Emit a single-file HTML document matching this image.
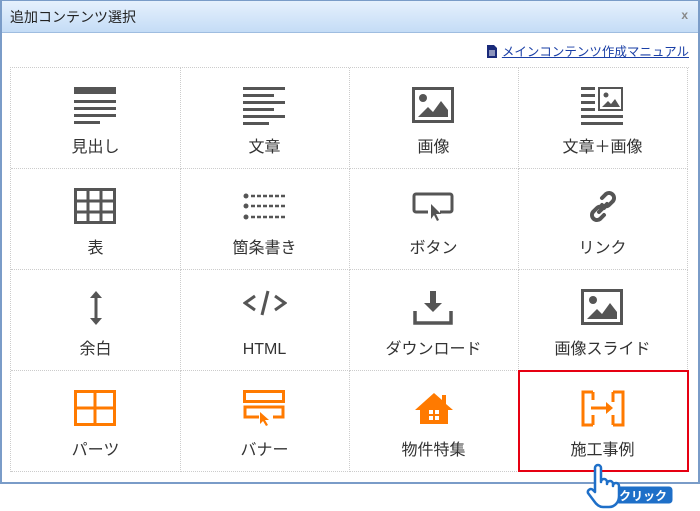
<!DOCTYPE html>
<html><head><meta charset="utf-8"><style>
*{margin:0;padding:0;box-sizing:border-box}
body{width:700px;height:511px;background:#fff;position:relative;overflow:hidden;font-family:"Liberation Sans","Noto Sans CJK JP",sans-serif}
.dlg{position:absolute;left:0;top:0;width:700px;height:484px;border:1px solid #7a9cc8;border-width:1px 2px 2px 2px;background:#fff}
.tb{position:absolute;left:0;top:0;right:0;height:32px;background:linear-gradient(#e6f1fd,#c4dcf6);border-bottom:1px solid #9fbde0}
.tb .t{position:absolute;left:8px;top:6px;font-size:14px;line-height:20px;color:#222}
.tb .x{position:absolute;right:10px;top:7px;font-size:12px;color:#888;font-weight:bold}
.man{position:absolute;right:9px;top:42px;font-size:12.5px;line-height:18px;color:#1a3fa6;text-decoration:underline}
.man svg{vertical-align:-2px;margin-right:5px}
.grid{position:absolute;left:10px;top:67px;width:679px;height:405px;border-top:1px dotted #ccc;border-left:1px dotted #ccc}
.c{position:absolute;width:170px;height:101px;border-right:1px dotted #ccc;border-bottom:1px dotted #ccc}
.c svg{position:absolute;left:50%;top:19px;transform:translateX(-50%)}
.c .l{position:absolute;left:0;right:0;top:70px;line-height:20px;height:20px;text-align:center;font-size:16px;color:#333}
.red{position:absolute;left:518px;top:370px;width:171px;height:102px;border:2px solid #e60012}
</style></head><body>
<div class="dlg">
<div class="tb"><span class="t">追加コンテンツ選択</span><span class="x">x</span></div>
<div class="man"><svg width="10" height="13" viewBox="0 0 10 13"><path d="M0 0h7l3 3v10H0z" fill="#1a2a7a"/><path d="M2 6h6M2 8h6M2 10h6" stroke="#fff" stroke-width="1"/></svg>メインコンテンツ作成マニュアル</div>
</div>
<div class="grid">
<div class="c" style="left:0;top:0"><svg width="44" height="38" viewBox="0 0 44 38"><rect x="0" y="0" width="42" height="7" fill="#555"/><rect x="0" y="13" width="42" height="3" fill="#555"/><rect x="0" y="20" width="42" height="3" fill="#555"/><rect x="0" y="27" width="42" height="3" fill="#555"/><rect x="0" y="34" width="26" height="3" fill="#555"/></svg><div class="l">見出し</div></div>
<div class="c" style="left:169px;top:0"><svg width="44" height="38" viewBox="0 0 44 38"><g fill="#555"><rect y="0" width="42" height="3"/><rect y="7" width="31" height="3"/><rect y="14" width="42" height="3"/><rect y="21" width="31" height="3"/><rect y="28" width="42" height="3"/><rect y="35" width="26" height="3"/></g></svg><div class="l">文章</div></div>
<div class="c" style="left:338px;top:0"><svg width="44" height="38" viewBox="0 0 44 38"><rect x="1.5" y="1.5" width="39" height="33" fill="none" stroke="#555" stroke-width="3"/><circle cx="11" cy="11" r="4" fill="#555"/><path d="M6 30l10-10 5 5 8-11 7 9v7z" fill="#555"/></svg><div class="l">画像</div></div>
<div class="c" style="left:507px;top:0"><svg width="44" height="38" viewBox="0 0 44 38"><g fill="#555"><rect y="0" width="14" height="3"/><rect y="7" width="14" height="3"/><rect y="14" width="14" height="3"/><rect y="21" width="14" height="3"/><rect y="28" width="42" height="3"/><rect y="35" width="42" height="3"/></g><rect x="18" y="1" width="23" height="22" fill="none" stroke="#555" stroke-width="2"/><circle cx="25" cy="8" r="2.5" fill="#555"/><path d="M21 20l6-6 3 3 4-5 5 8z" fill="#555"/></svg><div class="l">文章＋画像</div></div>
<div class="c" style="left:0;top:101px"><svg width="44" height="38" viewBox="0 0 44 38"><rect x="1.5" y="1.5" width="39" height="33" fill="none" stroke="#555" stroke-width="3"/><path d="M1 13h40M1 24h40M14 1v34M27 1v34" stroke="#555" stroke-width="3"/></svg><div class="l">表</div></div>
<div class="c" style="left:169px;top:101px"><svg width="44" height="38" viewBox="0 0 44 38"><g fill="#555"><circle cx="3" cy="8" r="2.5"/><circle cx="3" cy="18" r="2.5"/><circle cx="3" cy="29" r="2.5"/></g><path d="M8 8h34M8 18h34M8 29h34" stroke="#555" stroke-width="2.5" stroke-dasharray="4 2"/></svg><div class="l">箇条書き</div></div>
<div class="c" style="left:338px;top:101px"><svg width="44" height="38" viewBox="0 0 44 38"><path d="M16 24H4a2 2 0 0 1-2-2V8a2 2 0 0 1 2-2h34a2 2 0 0 1 2 2v14a2 2 0 0 1-2 2H28" fill="none" stroke="#555" stroke-width="3"/><path d="M19 16l0 15 3-4 3 6 2-1-3-6 5 0z" fill="#555"/></svg><div class="l">ボタン</div></div>
<div class="c" style="left:507px;top:101px"><svg width="44" height="38" viewBox="0 0 44 38"><g fill="none" stroke="#555" stroke-width="4" stroke-linecap="round"><path d="M21 10l4-4a5 5 0 0 1 7 7l-4 4a5 5 0 0 1-7 0"/><path d="M23 27l-4 4a5 5 0 0 1-7-7l4-4a5 5 0 0 1 7 0"/><path d="M18 24l8-8"/></g></svg><div class="l">リンク</div></div>
<div class="c" style="left:0;top:202px"><svg width="44" height="38" viewBox="0 0 44 38"><path d="M22 6v26" stroke="#555" stroke-width="3"/><path d="M16 9l6-7 6 7zM16 29l6 7 6-7z" fill="#555"/></svg><div class="l">余白</div></div>
<div class="c" style="left:169px;top:202px"><svg width="44" height="38" viewBox="0 0 44 38"><g fill="none" stroke="#555" stroke-width="3"><path d="M12 7l-10 7 10 7M32 7l10 7-10 7M25 2l-6 24"/></g></svg><div class="l">HTML</div></div>
<div class="c" style="left:338px;top:202px"><svg width="44" height="38" viewBox="0 0 44 38"><path d="M3 22v12h36V22" fill="none" stroke="#555" stroke-width="3.5"/><path d="M18 2h6v12h6l-9 9-9-9h6z" fill="#555"/></svg><div class="l">ダウンロード</div></div>
<div class="c" style="left:507px;top:202px"><svg width="44" height="38" viewBox="0 0 44 38"><rect x="1.5" y="1.5" width="39" height="33" fill="none" stroke="#555" stroke-width="3"/><circle cx="12" cy="11" r="4" fill="#555"/><path d="M6 30l10-10 5 5 8-11 7 9v7z" fill="#555"/></svg><div class="l">画像スライド</div></div>
<div class="c" style="left:0;top:303px"><svg width="44" height="38" viewBox="0 0 44 38"><rect x="1.5" y="1.5" width="39" height="33" fill="none" stroke="#ff7a00" stroke-width="3"/><path d="M1 18h40M21 1v34" stroke="#ff7a00" stroke-width="3"/></svg><div class="l">パーツ</div></div>
<div class="c" style="left:169px;top:303px"><svg width="44" height="38" viewBox="0 0 44 38"><rect x="1.5" y="1.5" width="39" height="10" fill="none" stroke="#ff7a00" stroke-width="3"/><path d="M16 27H2V17h38v10H30" fill="none" stroke="#ff7a00" stroke-width="3"/><path d="M17 22l0 12 3-3 3 5 2-1-3-5 4 0z" fill="#ff7a00"/></svg><div class="l">バナー</div></div>
<div class="c" style="left:338px;top:303px"><svg width="44" height="38" viewBox="0 0 44 38"><path d="M22 3L3 20h5v14h28V20h5l-7-6V5h-4v5z" fill="#ff7a00"/><g fill="#fff"><rect x="17" y="20" width="4" height="4"/><rect x="23" y="20" width="4" height="4"/><rect x="17" y="26" width="4" height="4"/><rect x="23" y="26" width="4" height="4"/></g></svg><div class="l">物件特集</div></div>
<div class="c" style="left:507px;top:303px"><svg width="44" height="38" viewBox="0 0 44 38"><path d="M12 2H2v33h10M12 25v10M12 2v8M32 2h10v33H32M32 2v10M32 25v10" fill="none" stroke="#ff7a00" stroke-width="3"/><path d="M10 18h17" stroke="#ff7a00" stroke-width="3"/><path d="M25 12l7 6-7 6z" fill="#ff7a00"/></svg><div class="l">施工事例</div></div>
</div>
<div class="red"></div>
<svg style="position:absolute;left:585px;top:462px" width="95" height="49" viewBox="0 0 95 49">
<rect x="30" y="24" width="58" height="18" rx="4" fill="#1e6fc8" stroke="#fff" stroke-width="1"/>
<text x="58" y="38" text-anchor="middle" font-size="12" font-weight="bold" fill="#fff" font-family="Liberation Sans,Noto Sans CJK JP,sans-serif">クリック</text>
<path d="M10 30V6a3 3 0 0 1 6 0v14a3 3 0 0 1 6 0v2a3 3 0 0 1 6 0v2a3 3 0 0 1 6 0v10c0 6-4 11-10 11h-6c-4 0-7-3-9-6l-6-8a3 3 0 0 1 5-3z" fill="#fff" stroke="#1e6fc8" stroke-width="2.5" stroke-linejoin="round"/>
</svg>
</body></html>
